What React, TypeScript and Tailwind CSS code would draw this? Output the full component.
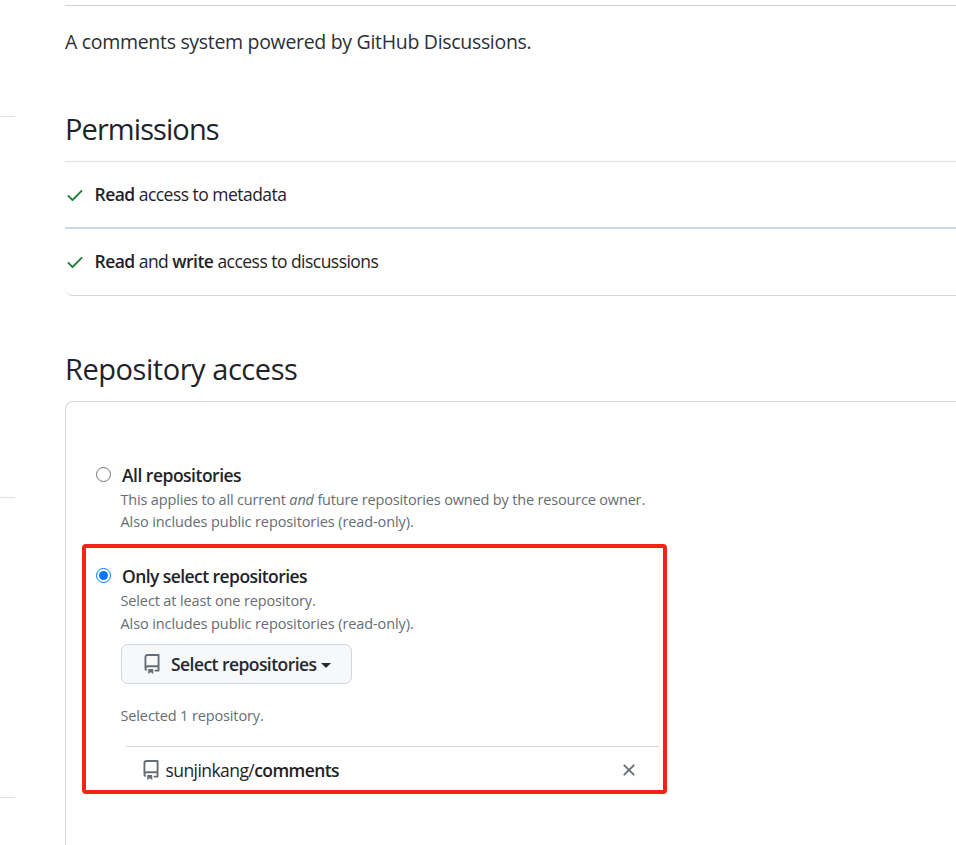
import type { ReactNode } from "react";

function CheckIcon() {
  return (
    <svg viewBox="0 0 16 16" className="h-5 w-5 shrink-0 fill-[#1a7f37]" aria-hidden="true">
      <path d="M13.78 4.22a.75.75 0 0 1 0 1.06l-7.25 7.25a.75.75 0 0 1-1.06 0L2.22 9.28a.751.751 0 0 1 .018-1.042.751.751 0 0 1 1.042-.018L6 10.94l6.72-6.72a.75.75 0 0 1 1.06 0Z" />
    </svg>
  );
}

function RepoIcon() {
  return (
    <svg viewBox="0 0 16 16" className="h-5 w-5 shrink-0 fill-[#656d76]" aria-hidden="true">
      <path d="M2 2.5A2.5 2.5 0 0 1 4.5 0h8.75a.75.75 0 0 1 .75.75v12.5a.75.75 0 0 1-.75.75h-2.5a.75.75 0 0 1 0-1.5h1.75v-2h-8a1 1 0 0 0-.714 1.7.75.75 0 1 1-1.072 1.05A2.495 2.495 0 0 1 2 11.5Zm10.5-1h-8a1 1 0 0 0-1 1v6.708A2.486 2.486 0 0 1 4.5 9h8ZM5 12.25a.25.25 0 0 1 .25-.25h3.5a.25.25 0 0 1 .25.25v3.25a.25.25 0 0 1-.4.2l-1.45-1.087a.249.249 0 0 0-.3 0L5.4 15.7a.25.25 0 0 1-.4-.2Z" />
    </svg>
  );
}

function CloseIcon() {
  return (
    <svg viewBox="0 0 16 16" className="h-5 w-5 shrink-0 fill-[#656d76]" aria-hidden="true">
      <path d="M3.72 3.72a.75.75 0 0 1 1.06 0L8 6.94l3.22-3.22a.751.751 0 0 1 1.042.018.751.751 0 0 1 .018 1.042L9.06 8l3.22 3.22a.751.751 0 0 1-.018 1.042.751.751 0 0 1-1.042.018L8 9.06l-3.22 3.22a.751.751 0 0 1-1.042-.018.751.751 0 0 1-.018-1.042L6.94 8 3.72 4.78a.75.75 0 0 1 0-1.06Z" />
    </svg>
  );
}

function Radio({ checked = false }: { checked?: boolean }) {
  return checked ? (
    <span className="flex h-[15px] w-[15px] shrink-0 items-center justify-center rounded-full border-[1.5px] border-[#0075ff] bg-white">
      <span className="h-[9px] w-[9px] rounded-full bg-[#0075ff]" />
    </span>
  ) : (
    <span className="block h-[15px] w-[15px] shrink-0 rounded-full border border-[#767676] bg-white" />
  );
}

function Permission({ children }: { children: ReactNode }) {
  return (
    <div className="flex h-[65px] items-center pt-px">
      <CheckIcon />
      <p className="ml-[9.5px] pb-[2px] text-[17.5px] leading-6 tracking-[-0.53px]">{children}</p>
    </div>
  );
}

export default function App() {
  return (
    <div className="flex h-[845px] w-full overflow-hidden bg-white font-['Open_Sans','Noto_Sans',sans-serif] text-[#1f2328]">
      <aside className="flex w-[15px] shrink-0 flex-col">
        <div className="h-[117px] border-b border-[#dcdfe3]" />
        <div className="h-[381px] border-b border-[#dcdfe3]" />
        <div className="h-[300px] border-b border-[#dcdfe3]" />
      </aside>
      <main className="ml-[50px] min-w-0 flex-1 whitespace-nowrap pt-[5px]">
        <div className="border-t border-[#d0d3d6] pt-[21px]">
          <p className="text-[19.5px] leading-[30px] tracking-[-0.31px] text-[#2b3036]">
            A comments system powered by GitHub Discussions.
          </p>
        </div>

        <h2 className="mt-[52px] h-[53px] border-b border-[#dcdfe3] text-[29px] leading-[40px] tracking-[-0.92px]">
          Permissions
        </h2>
        <div className="h-[134px] rounded-bl-[8px] border-b border-[#d0d7de]">
          <Permission>
            <b className="font-semibold">Read</b> access to metadata
          </Permission>
          <div className="h-px bg-[#d0d7de]" />
          <div className="border-t border-[#d0d7de]">
            <Permission>
              <b className="font-semibold">Read</b> and <b className="font-semibold">write</b> access to discussions
            </Permission>
          </div>
        </div>

        <h2 className="mt-[53px] h-[52px] text-[29px] leading-[40px] tracking-[-0.45px]">Repository access</h2>
        <section className="h-[460px] rounded-tl-[8px] border-l border-t border-[#d0d7de] pt-[60px]">
          <div className="flex h-[82px] pl-[30px]">
            <div className="pt-[5px]">
              <Radio />
            </div>
            <div className="ml-[9.5px] pt-px">
              <h3 className="h-[26px] pl-[1.5px] text-[17.5px] font-semibold leading-[24px] tracking-[-0.5px]">
                All repositories
              </h3>
              <p className="text-[14.5px] leading-[22px] tracking-[-0.17px] text-[#656d76]">
                This applies to all current <em>and</em> future repositories owned by the resource owner.
              </p>
              <p className="text-[14.5px] leading-[22px] tracking-[-0.1px] text-[#656d76]">
                Also includes public repositories (read-only).
              </p>
            </div>
          </div>

          <div className="ml-4 flex h-[250px] w-[585px] rounded-[4px] border-4 border-[#f52314] pl-[10px] pt-[15px]">
            <div className="pt-[5px]">
              <Radio checked />
            </div>
            <div className="ml-[9.5px] flex-1">
              <h3 className="h-[26px] pl-[1.5px] text-[17.5px] font-semibold leading-[26px] tracking-[-0.57px]">
                Only select repositories
              </h3>
              <p className="text-[14.5px] leading-[23px] tracking-[-0.13px] text-[#656d76]">
                Select at least one repository.
              </p>
              <p className="text-[14.5px] leading-[23px] tracking-[-0.1px] text-[#656d76]">
                Also includes public repositories (read-only).
              </p>
              <button className="ml-[0.5px] mt-[9px] flex h-10 w-[231px] items-center rounded-[7px] border border-[#d0d7de] bg-[#f6f8fa] pl-[20px] text-[17.5px] font-semibold tracking-[-0.56px] text-[#24292f]">
                <RepoIcon />
                <span className="ml-[9px]">Select repositories</span>
                <span className="ml-[5px] mt-[3px] h-0 w-0 border-x-[5px] border-t-[5px] border-x-transparent border-t-[#24292f]" />
              </button>
              <p className="mt-[20px] text-[14.5px] leading-[23px] tracking-[-0.13px] text-[#656d76]">
                Selected 1 repository.
              </p>
              <div className="ml-[5.5px] mt-[19px] flex h-[44px] w-[533px] items-center border-t border-[#d0d7de] pl-[15px] pr-[20px] pt-[3px]">
                <RepoIcon />
                <span className="ml-[4.5px] pb-px text-[17.5px] leading-6 tracking-[-0.57px]">
                  sunjinkang/<b className="font-semibold">comments</b>
                </span>
                <button className="ml-auto" aria-label="Remove">
                  <CloseIcon />
                </button>
              </div>
            </div>
          </div>
        </section>
      </main>
    </div>
  );
}
